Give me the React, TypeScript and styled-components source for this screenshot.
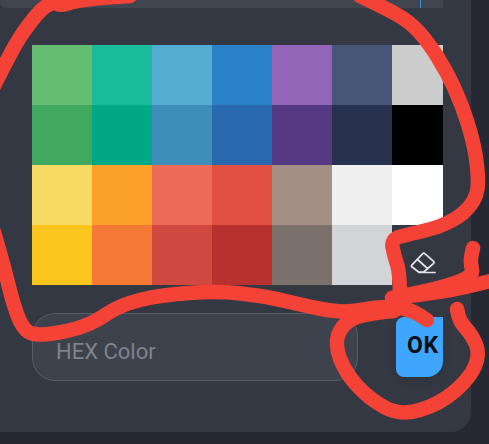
import React from "react";
import styled, { createGlobalStyle } from "styled-components";

const Global = createGlobalStyle`
  html, body { margin: 0; padding: 0; background: #262933; }
  * { box-sizing: border-box; }
`;
const Page = styled.div`
  position: relative;
  width: 489px;
  height: 444px;
  overflow: hidden;
  background: #262933;
  font-family: Roboto, "Liberation Sans", sans-serif;
`;
const Panel = styled.div`
  width: 471px;
  height: 432px;
  padding: 0 28px 0 32px;
  background: #333843;
  border-radius: 0 0 20px 0;
`;
const TopStrip = styled.div`
  position: relative;
  width: 443px;
  height: 8px;
  margin-left: -32px;
  background: #404550;
  border-radius: 0 0 0 6px;
`;
const Caret = styled.span`
  display: block;
  width: 1px;
  height: 8px;
  margin-left: 420px;
  background: #3b8ee0;
`;
const Swatches = styled.div`
  display: grid;
  grid-template-columns: repeat(6, 60px) 51px;
  grid-auto-rows: 60px;
  margin-top: 37px;
`;
const Swatch = styled.button<{ $color: string }>`
  display: block;
  padding: 0;
  border: 0;
  background: ${(p) => p.$color};
`;
const ClearButton = styled.button`
  display: flex;
  align-items: flex-start;
  justify-content: flex-start;
  padding: 26px 0 0 18px;
  border: 0;
  background: transparent;
`;
const Footer = styled.div`
  display: flex;
  align-items: center;
  justify-content: space-between;
  margin-top: 28px;
`;
const HexInput = styled.input`
  width: 326px;
  height: 68px;
  padding: 8px 23px 0;
  background: #3d424c;
  border: 1px solid #585d68;
  border-radius: 23px;
  outline: none;
  color: #fff;
  font-family: inherit;
  font-size: 22px;
  &::placeholder { color: #7f838c; opacity: 1; }
`;
const OkButton = styled.button`
  width: 47px;
  height: 60px;
  padding: 0 0 3px 11px;
  border: 0;
  border-radius: 8px 0 16px 8px;
  background: #3ea6ff;
  color: #0a0d12;
  font-family: inherit;
  font-size: 23px;
  font-weight: 700;
  letter-spacing: 0.6px;
  text-align: left;
  white-space: nowrap;
  box-shadow: 0 3px 10px rgba(0, 0, 0, 0.12);
`;
const Scribble = styled.svg`
  position: absolute;
  inset: 0;
  pointer-events: none;
`;

const colors = [
  "#65bd72", "#1abc9c", "#54acd2", "#2c82c9", "#9365b8", "#475577", "#cccccc",
  "#41a85f", "#00a885", "#3d8eb9", "#2969b0", "#553982", "#28324e", "#000000",
  "#f7da64", "#fba026", "#eb6b56", "#e25041", "#a38f84", "#efefef", "#ffffff",
  "#fac51c", "#f37934", "#d14841", "#b8312f", "#7c706b", "#d1d5d8",
];

const smooth = (pts: number[][]) => {
  let d = `M${pts[0][0]} ${pts[0][1]}`;
  for (let i = 1; i < pts.length - 1; i++) {
    const mx = (pts[i][0] + pts[i + 1][0]) / 2;
    const my = (pts[i][1] + pts[i + 1][1]) / 2;
    d += ` Q${pts[i][0]} ${pts[i][1]} ${mx} ${my}`;
  }
  const last = pts[pts.length - 1];
  return d + ` L${last[0]} ${last[1]}`;
};

const strokes = [
  [[-6, 86], [8, 58], [22, 33], [42, 8], [54, 2], [60, 6], [75, 1], [100, -2], [130, -4]],
  [[360, -4], [385, 8], [410, 22], [428, 42], [447, 72], [462, 105], [473, 140], [478, 170], [478, 195], [464, 214], [440, 227], [410, 234], [391, 239], [394, 255], [399, 270], [400, 293]],
  [[-6, 232], [5, 270], [12, 300], [22, 328], [35, 336], [70, 331], [95, 322], [120, 305], [160, 295], [217, 291], [265, 296], [310, 307], [345, 313], [380, 306], [410, 309], [427, 320]],
  [[392, 298], [430, 291], [474, 277], [470, 262], [473, 248]],
  [[394, 311], [360, 314], [341, 326], [335, 345], [345, 372], [368, 398], [400, 416], [440, 404], [470, 378], [480, 354], [472, 335], [460, 322], [457, 309]],
  [[400, 297], [440, 293], [495, 280]],
];

export default function App() {
  return (
    <Page>
      <Global />
      <Panel>
        <TopStrip>
          <Caret />
        </TopStrip>
        <Swatches>
          {colors.map((c) => (
            <Swatch key={c} $color={c} aria-label={c} />
          ))}
          <ClearButton aria-label="Clear">
            <svg width="26" height="24" viewBox="0 0 26 24" fill="none" stroke="#e3e6ec" strokeWidth="1.7" strokeLinejoin="round" strokeLinecap="round">
              <path d="M1.8 14.2 L12.8 2.6 a1.4 1.4 0 0 1 2 0 L23.6 10.4 a1.4 1.4 0 0 1 0 2 L13.8 21 H8.6 L1.8 15.8 a1.2 1.2 0 0 1 0 -1.6 Z" />
              <path d="M7.5 8.5 L17.5 17.5" />
              <path d="M9 21.5 H25" />
            </svg>
          </ClearButton>
        </Swatches>
        <Footer>
          <HexInput placeholder="HEX Color" />
          <OkButton>OK</OkButton>
        </Footer>
      </Panel>
      <Scribble width="489" height="444" viewBox="0 0 489 444" fill="none" stroke="#f44336" strokeWidth="14.5" strokeLinecap="round" strokeLinejoin="round">
        {strokes.map((s, i) => (
          <path key={i} d={smooth(s)} />
        ))}
      </Scribble>
    </Page>
  );
}
